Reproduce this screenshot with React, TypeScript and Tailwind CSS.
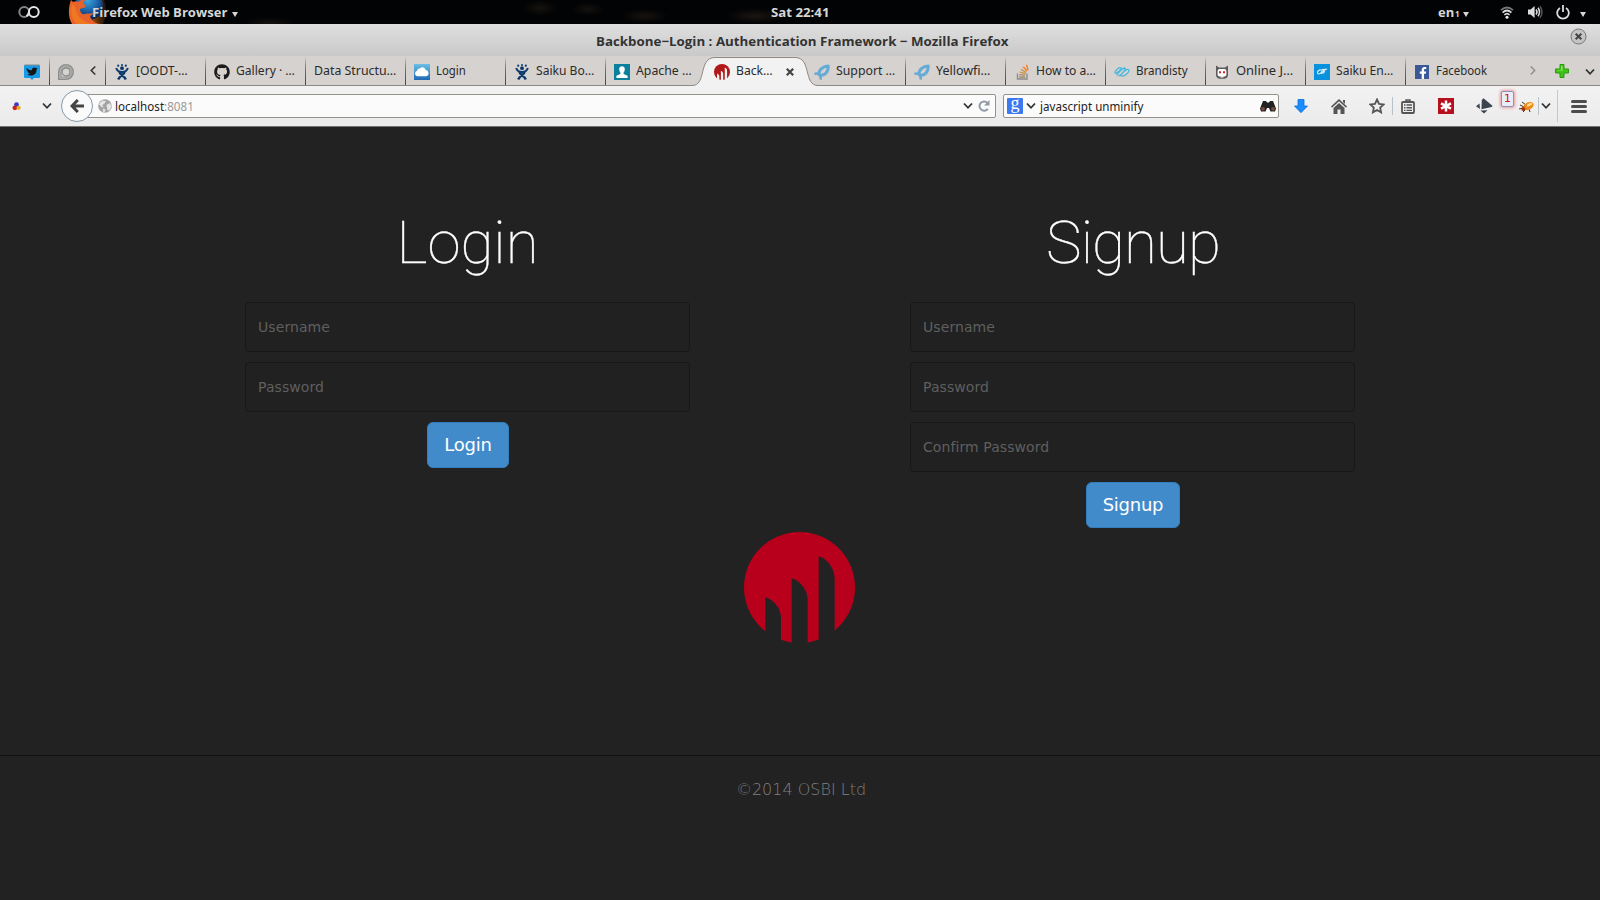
import { useLayoutEffect, useRef, useState, type ReactNode } from "react";
import { FaGithub, FaFacebookF } from "react-icons/fa";

/** Single-line label squeezed or stretched horizontally to a fixed width. */
function Fit({ w, className = "", children }: { w: number; className?: string; children: ReactNode }) {
  const ref = useRef<HTMLSpanElement>(null);
  const [scale, setScale] = useState(1);
  useLayoutEffect(() => {
    if (ref.current) setScale(w / ref.current.offsetWidth);
  }, [w]);
  return (
    <span className={`flex shrink-0 ${className}`} style={{ width: w }}>
      <span
        ref={ref}
        className="inline-block shrink-0 origin-left whitespace-nowrap"
        style={{ transform: `scaleX(${scale})` }}
      >
        {children}
      </span>
    </span>
  );
}

function Chevron({ className = "" }: { className?: string }) {
  return (
    <svg viewBox="0 0 10 8" className={`h-2 w-2.5 shrink-0 ${className}`} fill="none" stroke="#2e3436" strokeWidth="1.8">
      <path d="M1 1.5 5 5.8 9 1.5" />
    </svg>
  );
}

function OsbiMark({ className, fill, hole }: { className: string; fill: string; hole: string }) {
  return (
    <svg viewBox="0 0 333 333" className={className}>
      <circle cx="166.5" cy="166.5" r="166.5" fill={fill} />
      <g fill={hole}>
        <path d="M64 196C92 204 111 232 111 259V340H64Z" />
        <path d="M143 139C171 147 191 177 191 204V340H143Z" />
        <path d="M224 73C252 81 272 113 272 140V340H224Z" />
      </g>
    </svg>
  );
}

function Fox() {
  return (
    <svg viewBox="0 0 42 24" className="h-6 w-[42px]">
      <defs>
        <radialGradient id="globe" cx="0.45" cy="0.3" r="0.65">
          <stop offset="0" stopColor="#3aa6dd" />
          <stop offset="0.6" stopColor="#1b5fa5" />
          <stop offset="1" stopColor="#0b2a5c" />
        </radialGradient>
        <linearGradient id="tail" x1="0" x2="1">
          <stop offset="0" stopColor="#e66000" />
          <stop offset="1" stopColor="#5a3a10" stopOpacity="0.3" />
        </linearGradient>
      </defs>
      <path d="M26 0h10c3 7 3 17-1 24H20Z" fill="url(#tail)" />
      <circle cx="21" cy="6" r="14" fill="url(#globe)" />
      <path
        d="M3 0C0 8 0 18 4 24H32C25 23 23 19 22 16C24 15 25 14 25 13C22 14 20 13 17 14C14 15 12 12 12 9C13 8 16 8 18 7C18 5 15 4 15 2C16 1 17 0 18 0C14-1 11 1 10 2C8 1 7 1 5 2Z"
        fill="#e8632b"
      />
      <path d="M4 4C2 12 4 20 9 24H24C15 22 9 17 8 10C8 7 6 5 4 4Z" fill="#f58220" opacity="0.7" />
    </svg>
  );
}

function TopBar() {
  return (
    <div className="flex h-6 items-center overflow-hidden bg-[#020304] bg-[radial-gradient(ellipse_18px_8px_at_540px_8px,#16120f,transparent),radial-gradient(ellipse_16px_7px_at_588px_9px,#15110f,transparent),radial-gradient(ellipse_24px_7px_at_645px_16px,#17120f,transparent),radial-gradient(ellipse_30px_8px_at_755px_16px,#1a1512,transparent),radial-gradient(ellipse_26px_6px_at_270px_23px,#15110f,transparent)] font-['Open_Sans',sans-serif] text-[13px] font-bold text-[#d6d6d6]">
      <svg viewBox="0 0 22 12" className="ml-[18px] h-3 w-[22px]" fill="none" strokeWidth="2">
        <circle cx="6.2" cy="6" r="4.900" stroke="#858585" />
        <circle cx="15.8" cy="6" r="4.900" stroke="#e6e6e6" />
        <path d="M8.500 10.300C10.200 9 10.800 7.500 11 6" stroke="#e6e6e6" />
      </svg>
      <div className="ml-7 flex">
        <Fox />
      </div>
      <Fit w={135} className="relative -ml-[18px] pt-0.5">Firefox Web Browser</Fit>
      <Caret className="ml-[5px]" />
      <Fit w={58} className="ml-[533px] pt-0.5">Sat 22:41</Fit>
      <Fit w={16} className="ml-[609px] pt-0.5">en</Fit>
      <span className="mt-[3px] ml-px w-[5px] text-[8px]">1</span>
      <Caret className="ml-[3px]" />
      <svg viewBox="0 0 14 13" className="ml-[31px] h-[13px] w-3.5" fill="none" strokeWidth="1.7">
        <path d="M1 4.2Q7-1.2 13 4.2" stroke="#777" />
        <path d="M2.6 6.6Q7 2.4 11.4 6.6" stroke="#ddd" />
        <path d="M4.4 9Q7 6.4 9.6 9" stroke="#ddd" />
        <circle cx="7" cy="11.2" r="1.5" fill="#eee" />
      </svg>
      <svg viewBox="0 0 16 14" className="ml-[13px] h-3.5 w-4" fill="none" strokeWidth="1.5">
        <path d="M1 4.6h2.6L7.6 1v12L3.6 9.6H1Z" fill="#ddd" />
        <path d="M9 4.5q2 2.5 0 5" stroke="#ddd" />
        <path d="M11 2.8q3 4.2 0 8.4" stroke="#ddd" />
        <path d="M13 1.2q4 5.8 0 11.6" stroke="#555" />
      </svg>
      <svg viewBox="0 0 14 15" className="ml-[13px] h-[15px] w-3.5" fill="none" stroke="#ddd" strokeWidth="1.8">
        <path d="M4 2.9a5.8 5.8 0 1 0 6 0M7 0v7" />
      </svg>
      <Caret className="ml-[10px]" />
    </div>
  );
}

function Caret({ className = "" }: { className?: string }) {
  return (
    <svg viewBox="0 0 6 5" className={`mt-1 h-[5px] w-1.5 shrink-0 ${className}`} fill="#d6d6d6">
      <path d="M0 0h6L3 5Z" />
    </svg>
  );
}

function TitleBar() {
  return (
    <div className="flex h-8 items-center bg-linear-to-b from-[#dfdfdf] to-[#c9c9c9] font-['Open_Sans',sans-serif] text-[13px] font-bold text-[#333]">
      <Fit w={412} className="ml-[596px] pt-1">Backbone−Login : Authentication Framework − Mozilla Firefox</Fit>
      <svg viewBox="0 0 17 17" className="mb-[7px] ml-[562px] size-[17px]">
        <circle cx="8.5" cy="8.5" r="7.5" fill="#c4c4c4" stroke="#777" />
        <path d="m5.7 5.7 5.6 5.6m0-5.6-5.6 5.6" stroke="#444" strokeWidth="2" />
      </svg>
    </div>
  );
}

const Jira = () => (
  <svg viewBox="0 0 16 16" className="size-4" fill="none" stroke="#0c3a6e">
    <g fill="#0c3a6e" stroke="none">
      <circle cx="8" cy="4.200" r="1.900" />
      <circle cx="4.200" cy="1.700" r="1.100" />
      <circle cx="8" cy="1" r="1" />
      <circle cx="11.800" cy="1.700" r="1.100" />
    </g>
    <path d="M2.200 4C3 7 5.500 8 8 8s5-1 5.800-4" strokeWidth="2" />
    <path d="M5.500 8C6 11 10 11.500 11.800 15.500M10.500 8C10 11 6 11.500 4.200 15.500" strokeWidth="2.500" />
  </svg>
);

const icons: Record<string, ReactNode> = {
  jira: <Jira />,
  github: <FaGithub className="size-4 text-[#1b1b1b]" />,
  cloud: (
    <svg viewBox="0 0 16 16" className="size-4">
      <defs>
        <linearGradient id="sky" x2="0" y2="1">
          <stop offset="0" stopColor="#6bbfe4" />
          <stop offset="1" stopColor="#2069b4" />
        </linearGradient>
      </defs>
      <rect width="16" height="16" fill="url(#sky)" />
      <path d="M3.500 12.300a2.800 2.800 0 0 1-.4-5.500A2.500 2.500 0 0 1 6 4.600a3.300 3.300 0 0 1 5.800 1.500 3.200 3.200 0 0 1 .7 6.200Z" fill="#fff" />
    </svg>
  ),
  person: (
    <svg viewBox="0 0 16 16" className="size-4">
      <rect width="16" height="16" fill="#0a809c" />
      <path d="M8 2.300c2 0 3 1.400 2.800 3.200-.1 1.400-.7 2.300-1.200 3v1.600l4 1.600V14H2.400v-2.300l4-1.600V8.500c-.5-.7-1.100-1.600-1.200-3C5 3.700 6 2.300 8 2.300Z" fill="#fff" />
    </svg>
  ),
  fish: (
    <svg viewBox="0 0 16 16" className="size-4" fill="none" stroke="#66aad6">
      <path d="M5 10.500C4.500 6 9 2 14.200 2 14.500 7.500 11 12 6 11.200Z" strokeWidth="3" strokeLinejoin="round" />
      <path d="M.5 10C3 9 5 9.500 7 11.500M6 11.500C7 13 7 14 6.600 15.600" strokeWidth="2.600" />
    </svg>
  ),
  stack: (
    <svg viewBox="0 0 16 16" className="size-4" fill="none">
      <path d="M3.500 9.500v5.500h9.500V9.500" stroke="#8c8c8c" strokeWidth="1.400" />
      <path d="M5.200 13h6M5.300 10.700l6 .5" stroke="#a28b68" strokeWidth="1.300" />
      <path d="m5.700 8 5.800 1.700M7 5.300l5 3.200" stroke="#c98d3b" strokeWidth="1.300" />
      <path d="m9.300 2.800 3.700 4.500M12.500.8l1.500 5.500" stroke="#f48024" strokeWidth="1.400" />
    </svg>
  ),
  waves: (
    <svg viewBox="0 0 16 16" className="size-4" fill="none" stroke="#48b8e0" strokeWidth="1.300">
      <path d="M.8 8.500C2 6 4 4 6 3.600c2 0 1 2-1 3.700S1.500 10 .8 8.500M3.500 11.500C1.500 12 8 4 10.500 4c2.500 0-3 7.500-6 7.800M7.500 12C6 11.500 9 7.500 12.500 5.700c2-.7 3 .3 2 2.300-1.500 2.500-5 4.500-7 4Z" />
    </svg>
  ),
  cat: (
    <svg viewBox="0 0 16 16" className="size-4">
      <path d="M2 1.500 5 3.600h6l3-2.100v9.500q-.5 3.800-4 3.800H6q-3.500 0-4-3.800Z" fill="#5c5c5c" />
      <rect x="3.600" y="5" width="8.800" height="7.500" rx="2" fill="#fff" />
      <path d="M5 7.200h2v2H5Zm4 0h2v2H9Z" fill="#d22" />
      <path d="M6.500 12h3v1.500h-3Z" fill="#eee" />
    </svg>
  ),
  saiku: (
    <svg viewBox="0 0 16 16" className="size-4" fill="none" stroke="#d8effb" strokeWidth="1.100">
      <rect width="16" height="16" fill="#0891dc" stroke="none" />
      <path d="M7.500 6C5 5.500 3 7.500 3.500 9s3 1 4-1S8 5 9.500 5.500 8 9 7.500 10M8 6.200c2-1 4.500-.7 5-1.200M9.500 9.500 11 6" />
    </svg>
  ),
  facebook: (
    <span className="flex size-3.5 translate-x-px items-end justify-end bg-[#3b5998]">
      <FaFacebookF className="size-3 text-white" />
    </span>
  ),
};

const Separator = () => <div className="ml-auto w-px shrink-0 self-stretch bg-linear-to-b from-[#d6d2cf] via-[#7d7873] via-40% to-[#45413d]" />;

function Tab({ icon, label, w, last }: { icon?: string; label: string; w: number; last?: boolean }) {
  return (
    <div className="flex h-full w-[100px] shrink-0 items-center pl-2">
      {icon && <span className="mr-1.5 flex w-4 items-center pt-0.5">{icons[icon]}</span>}
      <Fit w={w} className="pt-0.5">{label}</Fit>
      {!last && <Separator />}
    </div>
  );
}

function TabStrip() {
  return (
    <div className="relative flex h-[30px] items-stretch border-b border-[#8e8984] bg-[#d6d2cf] font-['Noto_Sans',sans-serif] text-[12.5px] text-[#2a2a2a]">
      <div className="flex w-[50px] items-center pl-6">
        <svg viewBox="0 0 16 16" className="mt-0.5 size-4">
          <path d="M1 1h14q1 0 1 1v11q0 1-1 1h-5l-2 2-2-2H1q-1 0-1-1V2q0-1 1-1Z" fill="#169be8" />
          <path d="M.5 1h15" stroke="#888" />
          <path d="M2.500 4Q5 6.500 7.800 6.300 8 3.500 10.500 3.500l1.500.6 1.500-.4-.9 1.500C12.800 9 10.500 11.500 7 11.500q-2.500 0-4-1 2 0 3-1-2-.4-2.200-1.800Q2.300 6.500 2.500 4Z" fill="#161616" />
        </svg>
        <Separator />
      </div>
      <div className="flex w-14 items-center pl-[7px]">
        <svg viewBox="0 0 18 18" className="mt-0.5 size-[18px]" fill="none" stroke="#8d8d8d">
          <path d="M1.800 16.200V9A7.200 7.200 0 1 1 9 16.200H1.800Z" strokeWidth="1.600" />
          <path d="M3.800 14.200V9A5.400 5.400 0 1 1 9 14.400Z" strokeWidth="1.800" stroke="#a5a5a5" />
          <circle cx="9" cy="9" r="4" strokeWidth="1.400" />
        </svg>
        <svg viewBox="0 0 6 9" className="ml-[15px] h-[9px] w-[6px]" fill="none" stroke="#333" strokeWidth="1.500">
          <path d="M5.300.5 1.200 4.500l4.100 4" />
        </svg>
        <Separator />
      </div>
      <Tab icon="jira" label="[OODT-…" w={52} />
      <Tab icon="github" label="Gallery · …" w={59} />
      <Tab label="Data Structu…" w={82} />
      <Tab icon="cloud" label="Login" w={30} />
      <Tab icon="jira" label="Saiku Bo…" w={58} />
      <Tab icon="person" label="Apache …" w={56} last />
      <div className="relative flex w-[100px] shrink-0 items-center pl-2">
        <svg viewBox="0 0 130 30" className="absolute top-0 -left-[16px] h-[30px] w-[130px]">
          <path d="M2 29.500C17 29.500 8 1.500 25 1.500H105C122 1.500 113 29.500 128 29.500V30H2Z" fill="#f3f2f2" />
          <path d="M2 29.500C17 29.500 8 1.500 25 1.500H105C122 1.500 113 29.500 128 29.500" fill="none" stroke="#8e8984" />
        </svg>
        <OsbiMark className="relative mt-0.5 mr-1.5 size-4" fill="#b01818" hole="#f3f2f2" />
        <Fit w={37} className="relative pt-0.5">Back…</Fit>
        <svg viewBox="0 0 8 8" className="relative mt-0.5 ml-[13px] size-2" stroke="#444" strokeWidth="2.200">
          <path d="m.8.8 6.400 6.400m0-6.400L.8 7.200" />
        </svg>
      </div>
      <Tab icon="fish" label="Support …" w={59} />
      <Tab icon="fish" label="Yellowfi…" w={55} />
      <Tab icon="stack" label="How to a…" w={60} />
      <Tab icon="waves" label="Brandisty" w={52} />
      <Tab icon="cat" label="Online J…" w={57} />
      <Tab icon="saiku" label="Saiku En…" w={57} />
      <Tab icon="facebook" label="Facebook" w={51} last />
      <div className="flex items-center">
        <svg viewBox="0 0 6 9" className="ml-[24px] h-[9px] w-[6px]" fill="none" stroke="#8a8a8a" strokeWidth="1.300">
          <path d="m.7.5 4.100 4-4.100 4" />
        </svg>
        <svg viewBox="0 0 14 14" className="ml-[19px] size-3.5">
          <path d="M5 .5h4V5h4.500v4H9v4.500H5V9H.5V5H5Z" fill="#3fc414" stroke="#2a9a10" />
          <path d="M6 2h1.500v4.500H2V6h4Z" fill="#8fe66c" />
        </svg>
        <Chevron className="mt-0.5 ml-[16px]" />
      </div>
    </div>
  );
}

function Toolbar() {
  return (
    <div className="flex h-[41px] items-center border-b border-[#77736e] bg-linear-to-b from-[#f3f2f2] to-[#ebebeb] font-['Noto_Sans',sans-serif] text-[12.5px]">
      <svg viewBox="0 0 10 10" className="ml-3 size-[9px]">
        <circle cx="5" cy="3" r="2.700" fill="#3a3ac8" />
        <circle cx="3.200" cy="6.500" r="2.700" fill="#cc2222" />
        <circle cx="7.300" cy="6.500" r="2.400" fill="#e0b020" />
      </svg>
      <Chevron className="ml-[21px]" />
      <div className="relative z-10 ml-[9px] flex size-8 shrink-0 items-center justify-center rounded-full border border-[#8799a8] bg-[#fafafa]">
        <svg viewBox="0 0 14 14" className="h-3.5 w-3.5" fill="none" stroke="#444" strokeWidth="3">
          <path d="M7.800 1 2 7l5.800 6M2.500 7H14" />
        </svg>
      </div>
      <div className="-ml-[6px] flex h-6 w-[909px] shrink-0 items-center rounded-r-[2px] border border-[#97918b] bg-[#fbfbfb] pl-[10px]">
        <svg viewBox="0 0 14 14" className="size-3.5">
          <circle cx="7" cy="7" r="6.800" fill="#a3a3a3" />
          <path d="M2 3.500 4.500 1.500 8 2 6.500 4.500 4.500 6 5.500 8.500 3.500 8 1 5.500ZM8.500 6l3-2 2 3-1.500 4-2.500.5-.5-3ZM5 9.500l2.500 1-1 3-1.500-.7Z" fill="#e4e4e4" />
        </svg>
        <Fit w={79} className="ml-[3px] pt-0.5 text-[#222]">
          localhost<span className="text-[#999]">:8081</span>
        </Fit>
        <Chevron className="ml-[769px]" />
        <svg viewBox="0 0 12 12" className="ml-[5px] size-3" fill="none" stroke="#8f9aa5" strokeWidth="2">
          <path d="M9.800 8.800A4.600 4.600 0 1 1 9.500 3" />
          <path d="M11.500 0v5.500H6Z" fill="#8f9aa5" stroke="none" />
        </svg>
      </div>
      <div className="ml-[7px] flex h-6 w-[276px] shrink-0 items-center rounded-[2px] border border-[#97918b] bg-[#fbfbfb] pl-[3px]">
        <span className="flex size-4 items-center justify-center rounded-[1px] bg-[#3c78f0] pb-1.5 font-['Liberation_Serif',serif] text-[18px] leading-4 text-white">g</span>
        <Chevron className="ml-[3px]" />
        <Fit w={103} className="ml-1 pt-0.5 text-[#222]">javascript unminify</Fit>
        <svg viewBox="0 0 16 12" className="ml-[117px] h-3 w-4">
          <path d="M3 1h3l1 1.500h2L10 1h3l3 7.500-1 3h-4.500L9 8H7l-1.500 3.500H1l-1-3Z" fill="#222" />
          <circle cx="3" cy="8.800" r="1.900" fill="#7a4a3a" />
          <circle cx="13" cy="8.800" r="1.900" fill="#7a4a3a" />
        </svg>
      </div>
      <svg viewBox="0 0 14 14" className="ml-[15px] size-3.5">
        <path d="M4 .5h6V7h3.500L7 13.700.5 7H4Z" fill="#1a8cff" stroke="#0b6fd6" strokeWidth=".8" />
      </svg>
      <svg viewBox="0 0 16 15" className="ml-[23px] h-[15px] w-4" fill="#555">
        <path d="M8 0 16 7.500 15 8.700 8 2.300 1 8.700 0 7.500Z" />
        <path d="M2.500 9 8 4l5.500 5v6h-4v-4.500h-3V15h-4ZM12 1h2v4l-2-2Z" />
      </svg>
      <svg viewBox="0 0 16 16" className="ml-[22px] size-4" fill="none" stroke="#555" strokeWidth="1.800">
        <path d="m8 1.500 2 4.300 4.700.6-3.500 3.200.9 4.800L8 12l-4.100 2.400.9-4.800L1.300 6.400 6 5.800Z" />
      </svg>
      <div className="ml-[7px] h-[18px] w-px bg-[#b8c2cc]" />
      <svg viewBox="0 0 14 15" className="ml-2 h-[15px] w-3.5" fill="none" stroke="#555" strokeWidth="1.800">
        <rect x="1" y="3" width="12" height="11" rx="1" />
        <path d="M5 3V1h4v2M3 6h1.500M3 8.700h1.500M3 11.400h1.500M5.500 6H11M5.500 8.700H11M5.500 11.400H11" strokeWidth="1.400" />
      </svg>
      <svg viewBox="0 0 16 16" className="ml-[23px] size-4">
        <rect width="16" height="16" fill="#b80f1f" />
        <path d="M8 2.500v11M3 5.300l10 5.400M13 5.300 3 10.700" stroke="#fff" strokeWidth="2.500" />
      </svg>
      <svg viewBox="0 0 17 16" className="ml-[22px] h-4 w-[17px]" fill="#3b454f">
        <path d="M7.500.3 16.700 8 15.500 9 5.500 11.200 5.800 2Z" />
        <path d="M3.500 5.500 4 11 0 8.300ZM4.500 12.600l7-.3L8 15.500Z" />
      </svg>
      <div className="mb-[14px] ml-2 flex h-4 w-[13px] items-center justify-center rounded-[2px] border border-[#8f93b5] bg-[#e9edf7] font-['DejaVu_Sans',sans-serif] text-[11px] text-[#c11] shadow-[0_0_3px_1px_#e59a9a]">
        1
      </div>
      <svg viewBox="0 0 16 13" className="ml-[5px] h-[13px] w-4">
        <path d="m1 5 4 2M4 12l3-3M11 12l-1-3M3 2l4 3M0 9l5-1" stroke="#43301c" />
        <ellipse cx="9.500" cy="6" rx="5.500" ry="3.600" transform="rotate(-28 9.500 6)" fill="#ee8a1c" />
        <ellipse cx="10.500" cy="4.700" rx="3" ry="1.300" transform="rotate(-28 10.500 4.700)" fill="#ffe08a" />
        <circle cx="4.300" cy="9" r="2" fill="#a5350c" />
      </svg>
      <div className="ml-[3px] h-[18px] w-px bg-[#b8c2cc]" />
      <Chevron className="ml-0.5" />
      <div className="ml-[6px] h-8 w-px bg-[#c2c8ce]" />
      <div className="ml-[13px] flex w-4 flex-col gap-[2px]">
        <div className="h-[3px] rounded-full bg-[#4c4c4c]" />
        <div className="h-[3px] rounded-full bg-[#4c4c4c]" />
        <div className="h-[3px] rounded-full bg-[#4c4c4c]" />
      </div>
    </div>
  );
}

type AuthFormProps = { title: string; fields: string[]; titleClass?: string; buttonClass: string };

function AuthForm({ title, fields, titleClass = "", buttonClass }: AuthFormProps) {
  return (
    <form className="flex flex-col items-center px-[110px]">
      <h1
        className={`mb-[26px] h-[66px] font-[Roboto,sans-serif] text-[60px] leading-[66px] font-thin text-white [-webkit-text-stroke:0.35px_white] ${titleClass}`}
      >
        {title}
      </h1>
      {fields.map((f) => (
        <input
          key={f}
          type="text"
          placeholder={f}
          className="mb-2.5 h-[50px] w-full rounded border border-[#171717] bg-[#212121] px-3 text-sm tracking-[0.08px] text-white placeholder:text-[#5f5f5f]"
        />
      ))}
      <button
        type="button"
        className={`flex h-[46px] items-center justify-center rounded-md border border-[#357ebd] bg-[#428bca] text-lg text-white ${buttonClass}`}
      >
        {title}
      </button>
    </form>
  );
}

export default function App() {
  return (
    <div className="flex h-[900px] w-[1600px] flex-col overflow-hidden bg-[#222]">
      <TopBar />
      <TitleBar />
      <TabStrip />
      <Toolbar />
      <main className="flex flex-1 flex-col font-['DejaVu_Sans',sans-serif]">
        <div className="mx-auto mt-[83px] grid h-[322px] w-[1330px] grid-cols-2">
          <AuthForm title="Login" fields={["Username", "Password"]} buttonClass="ml-px w-[82px] tracking-[-0.2px]" />
          <AuthForm
            title="Signup"
            fields={["Username", "Password", "Confirm Password"]}
            titleClass="pl-px tracking-[-0.9px]"
            buttonClass="ml-px w-[94px] tracking-[-0.25px]"
          />
        </div>
        <OsbiMark className="ml-[744px] size-[111px]" fill="#b8001c" hole="#222" />
        <footer className="mt-[112px] border-t border-[#0f0f0f] pt-[22px] pl-0.5 text-center text-base font-extralight text-[#808080]">
          ©2014 OSBI Ltd
        </footer>
      </main>
    </div>
  );
}
